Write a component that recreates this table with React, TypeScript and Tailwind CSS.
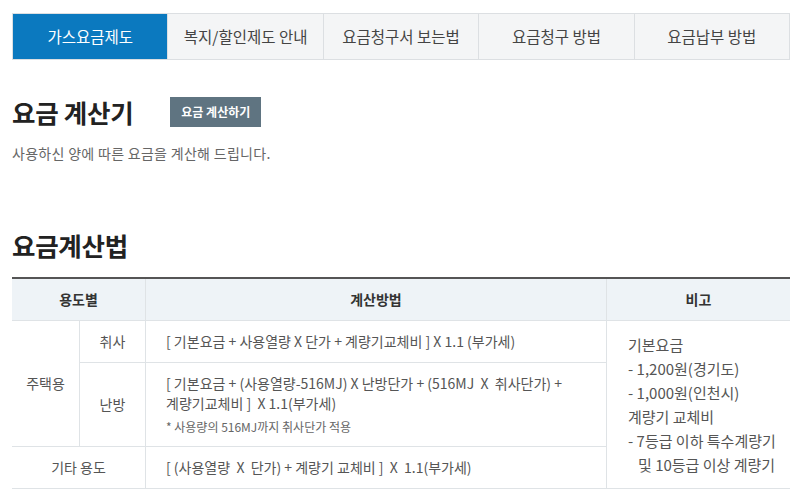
import React from "react";

const tabs = ["가스요금제도", "복지/할인제도 안내", "요금청구서 보는법", "요금청구 방법", "요금납부 방법"];

const font = { fontFamily: '"Noto Sans CJK KR", "Noto Sans", sans-serif' };

export default function App() {
  return (
    <div className="w-[800px] h-[500px] bg-white text-[#333] overflow-hidden pl-3 pr-[10px] pt-[13px]" style={font}>
      {/* tabs */}
      <div className="flex h-[47px] border border-[#dcdfe2]">
        {tabs.map((t, i) => (
          <div
            key={t}
            className={
              i === 0
                ? "flex-1 flex items-center justify-center bg-[#0b79bf] text-white text-[15.5px]"
                : "flex-1 flex items-center justify-center bg-[#f4f5f6] text-[#444] text-[15.5px] border-l border-[#dcdfe2]"
            }
          >
            {t}
          </div>
        ))}
      </div>

      {/* calculator */}
      <div className="flex items-center mt-[37px] h-[30px]">
        <h2 className="text-[25.5px] font-bold text-[#222] tracking-[-0.3px]">요금 계산기</h2>
        <button className="ml-[37px] h-[30px] px-[11px] bg-[#5f7481] text-white text-[12px] font-bold">요금 계산하기</button>
      </div>
      <p className="mt-[16px] text-[14px] text-[#666] tracking-[0.3px]">사용하신 양에 따른 요금을 계산해 드립니다.</p>

      {/* method */}
      <h2 className="mt-[64px] text-[25.5px] font-bold text-[#222] tracking-[-0.3px] leading-[34px]">요금계산법</h2>
      <div className="mt-[15px] border-t-2 border-[#555] text-[14px]">
        <div className="grid grid-cols-[133px_461px_1fr] h-[42px] bg-[#eef3f7] border-b border-[#dfe3e6] font-bold text-[#333]">
          <div className="flex items-center justify-center">용도별</div>
          <div className="flex items-center justify-center border-l border-[#dfe3e6]">계산방법</div>
          <div className="flex items-center justify-center border-l border-[#dfe3e6]">비고</div>
        </div>
        <div className="grid grid-cols-[133px_461px_1fr] border-b border-[#dfe3e6] text-[#555]">
          <div className="flex flex-col">
            <div className="flex h-[126px] border-b border-[#dfe3e6]">
              <div className="w-[67px] flex items-center justify-center">주택용</div>
              <div className="flex-1 flex flex-col border-l border-[#dfe3e6]">
                <div className="h-[42px] flex items-center justify-center border-b border-[#dfe3e6]">취사</div>
                <div className="flex-1 flex items-center justify-center">난방</div>
              </div>
            </div>
            <div className="h-[41px] flex items-center justify-center">기타 용도</div>
          </div>
          <div className="flex flex-col border-l border-[#dfe3e6]">
            <div className="h-[42px] flex items-center pl-[20px] border-b border-[#dfe3e6]">[ 기본요금 + 사용열량 X 단가 + 계량기교체비 ] X 1.1 (부가세)</div>
            <div className="h-[84px] flex flex-col justify-center pl-[20px] pr-3 border-b border-[#dfe3e6] break-keep">
              <div className="leading-[20px]">[ 기본요금 + (사용열량-516MJ) X 난방단가 + (516MJ &nbsp;X &nbsp;취사단가) + 계량기교체비 ] &nbsp;X 1.1(부가세)</div>
              <div className="mt-[5px] text-[12px] text-[#666]">* 사용량의 516MJ까지 취사단가 적용</div>
            </div>
            <div className="h-[41px] flex items-center pl-[20px]">[ (사용열량 &nbsp;X &nbsp;단가) + 계량기 교체비 ] &nbsp;X &nbsp;1.1(부가세)</div>
          </div>
          <div className="flex flex-col justify-center pl-[21px] border-l border-[#dfe3e6] leading-[24px] text-[15px]">
            <div>기본요금</div>
            <div>- 1,200원(경기도)</div>
            <div>- 1,000원(인천시)</div>
            <div>계량기 교체비</div>
            <div>- 7등급 이하 특수계량기</div>
            <div className="pl-[10px]">및 10등급 이상 계량기</div>
          </div>
        </div>
      </div>
    </div>
  );
}
